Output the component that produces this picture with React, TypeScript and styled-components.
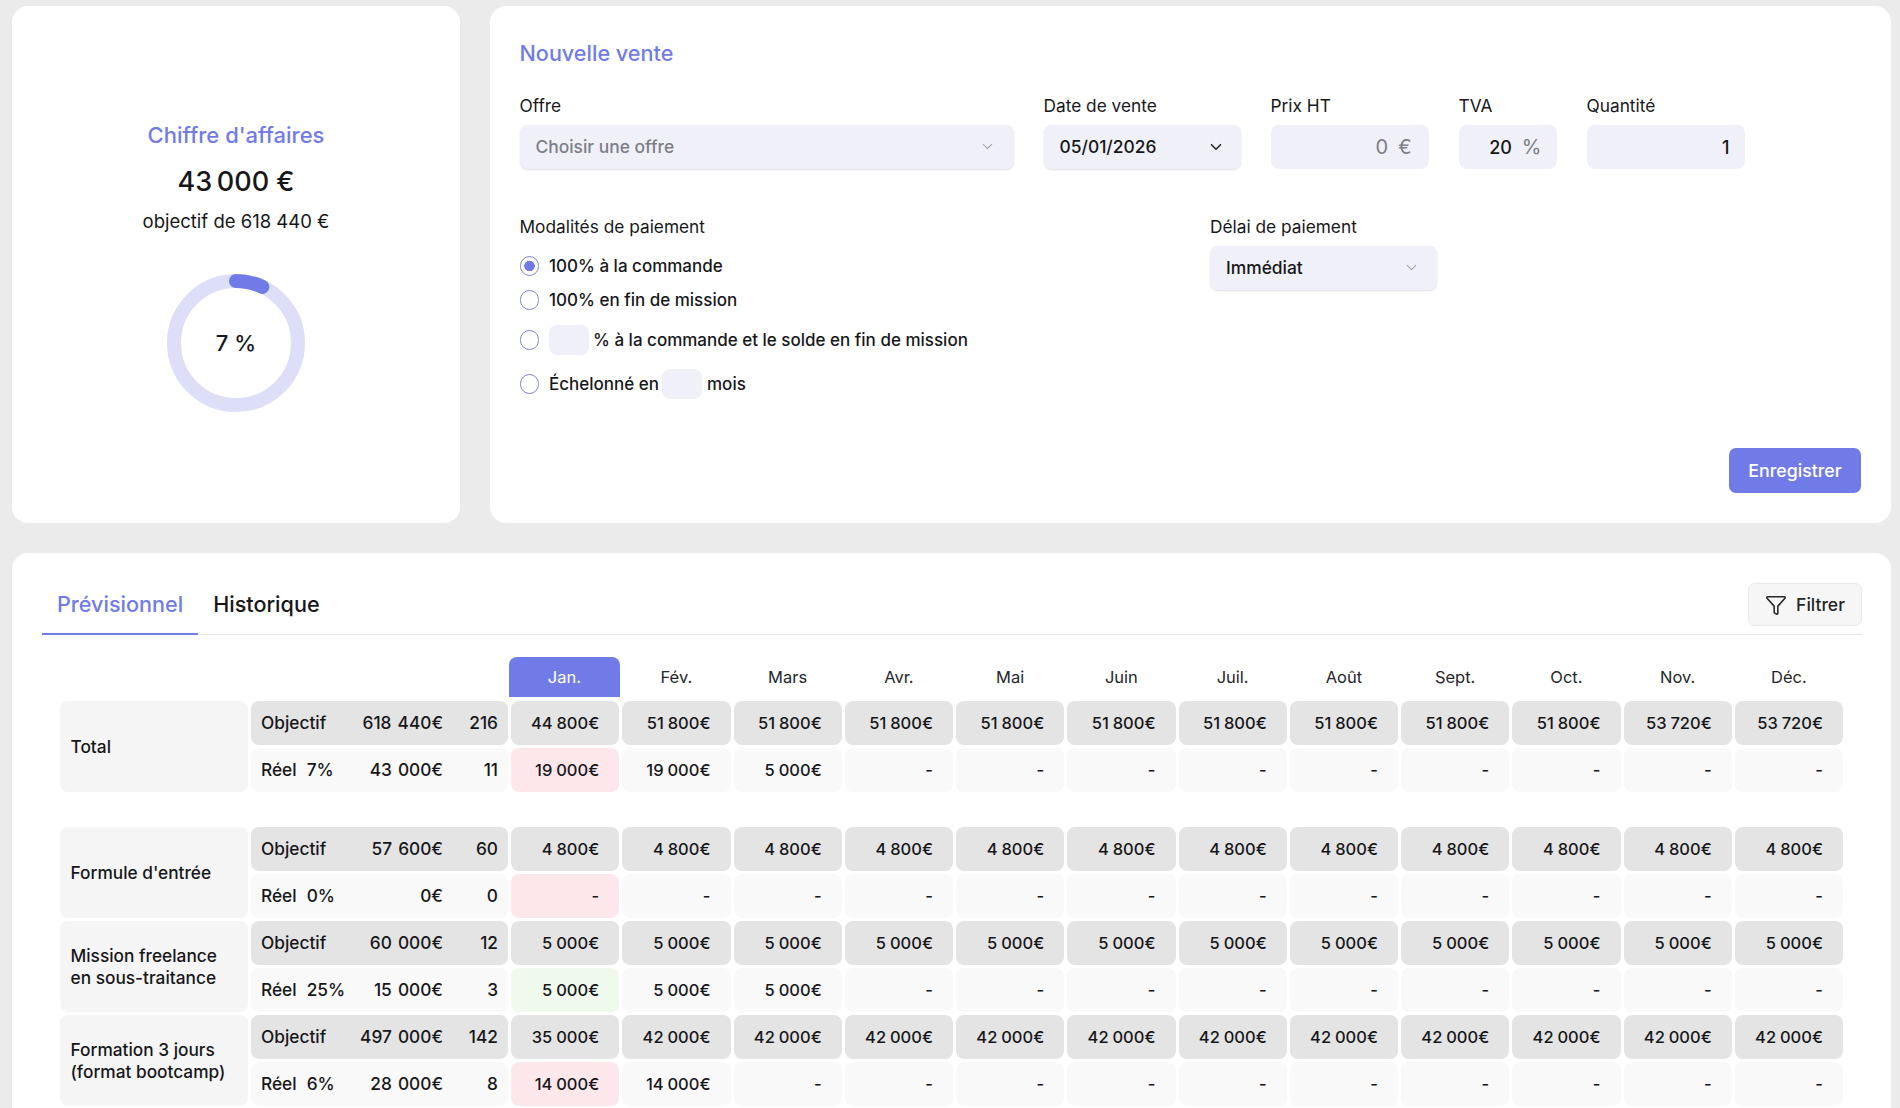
import React from 'react';
import styled, { createGlobalStyle } from 'styled-components';
import { ChevronDown, Filter } from 'lucide-react';

const Global = createGlobalStyle`
  html, body { margin: 0; padding: 0; background: #ebebeb; }
  body { font-family: Inter, "Noto Sans", sans-serif; color: #17171a; overflow: hidden; height: 1108px; }
  * { box-sizing: border-box; }
`;

const ACCENT = '#717be8';

const Page = styled.div`
  height: 1108px;
  overflow: hidden;
  padding: 6px 9px 0 12px;
`;
const TopRow = styled.div`
  display: grid;
  grid-template-columns: 448px 1fr;
  gap: 30px;
  height: 517px;
`;
const Card = styled.section`
  background: #fff;
  border-radius: 16px;
`;
const SummaryCard = styled(Card)`
  display: flex;
  flex-direction: column;
  align-items: center;
  justify-content: center;
  padding-top: 2px;
`;
const SummaryTitle = styled.h2`
  margin: 0;
  font-size: 22px;
  line-height: 30px;
  font-weight: 500;
  color: ${ACCENT};
`;
const SummaryValue = styled.div`
  margin-top: 14px;
  font-size: 27px;
  line-height: 36px;
  font-weight: 550;
`;
const SummaryGoal = styled.div`
  margin-top: 10px;
  font-size: 18.5px;
  line-height: 22px;
`;
const Ring = styled.div`
  margin-top: 42px;
  display: grid;
  place-items: center;
  width: 138px;
  height: 138px;
  & > * { grid-area: 1 / 1; }
`;
const RingText = styled.span`
  font-size: 22px;
  font-weight: 550;
`;

const FormCard = styled(Card)`
  display: flex;
  flex-direction: column;
  padding: 30px 30px 30px 29.5px;
`;
const FormTitle = styled.h2`
  margin: 0 0 26px;
  font-size: 21.6px;
  line-height: 34px;
  font-weight: 500;
  color: ${ACCENT};
`;
const FieldRow = styled.div`
  display: flex;
  gap: 30px;
`;
const Field = styled.div<{ $w: number }>`
  width: ${p => p.$w}px;
`;
const Label = styled.div`
  font-size: 17.3px;
  line-height: 20px;
  margin-bottom: 9px;
`;
const Select = styled.div<{ $muted?: boolean }>`
  height: 44px;
  display: flex;
  align-items: center;
  justify-content: space-between;
  padding: 0 16px 1px;
  border-radius: 8px;
  background: #f0f1f8;
  font-size: 17.4px;
  font-weight: 500;
  color: ${p => (p.$muted ? '#7c7e86' : '#17171a')};
  box-shadow: 0 1px 2px rgba(30, 30, 60, 0.14);
`;
const FaintChevron = styled(ChevronDown)`
  margin-right: 1.5px;
  color: #a0a2ac;
`;
const NumberBox = styled.div<{ $pad?: number }>`
  height: 44px;
  display: flex;
  align-items: center;
  justify-content: flex-end;
  gap: 10px;
  padding: 0 ${p => p.$pad ?? 15}px;
  border-radius: 8px;
  background: #f0f1f8;
  font-size: 18px;
  font-weight: 500;
`;
const Muted = styled.span`
  color: #7c7e86;
  font-size: 20px;
  font-weight: 400;
`;
const PaymentRow = styled.div`
  display: grid;
  grid-template-columns: 690.5px 227px;
  margin-top: 48px;
`;
const RadioList = styled.div`
  display: flex;
  flex-direction: column;
  gap: 12px;
  margin-top: 18px;
`;
const RadioRow = styled.div<{ $tall?: boolean }>`
  display: flex;
  align-items: center;
  height: ${p => (p.$tall ? 30 : 22)}px;
  margin-top: ${p => (p.$tall ? 2 : 0)}px;
  padding-bottom: 1px;
  font-size: 17px;
  font-weight: 450;
`;
const Radio = styled.span<{ $on?: boolean }>`
  width: 19.5px;
  height: 19.5px;
  flex: none;
  margin: 1px 10px 0 0;
  border-radius: 50%;
  border: 1.5px solid #7f86cf;
  background: ${p => (p.$on ? `radial-gradient(circle, ${ACCENT} 0 5px, transparent 5.5px)` : '#fff')};
`;
const SmallInput = styled.span`
  width: 40px;
  height: 30px;
  flex: none;
  margin: 1px 4px 0 0;
  border-radius: 8px;
  background: #f0f1f8;
`;
const InlineSmallInput = styled(SmallInput)`
  margin: 1px 5px 0 3px;
`;
const SaveButton = styled.button`
  margin-top: auto;
  align-self: flex-end;
  width: 132px;
  height: 45px;
  border: 0;
  border-radius: 7px;
  background: ${ACCENT};
  color: #fff;
  font: 500 17.8px Inter, sans-serif;
`;

const TableCard = styled(Card)`
  margin-top: 30px;
  padding: 30px 29px 40px 30px;
`;
const TabBar = styled.div`
  display: flex;
  align-items: flex-start;
  justify-content: space-between;
  height: 52px;
  border-bottom: 1px solid #e6e6e6;
`;
const Tabs = styled.div`
  display: flex;
`;
const Tab = styled.div<{ $active?: boolean }>`
  height: 52px;
  padding: 0 15px;
  font-size: 21.6px;
  line-height: 42px;
  font-weight: 500;
  color: ${p => (p.$active ? ACCENT : '#17171a')};
  border-bottom: 2px solid ${p => (p.$active ? ACCENT : 'transparent')};
  margin-bottom: -1px;
`;
const FilterButton = styled.button`
  width: 114px;
  height: 43px;
  display: flex;
  align-items: center;
  justify-content: center;
  gap: 9px;
  border: 1px solid #e8e8e8;
  border-radius: 7px;
  background: #f6f6f6;
  color: #26262a;
  font: 500 17.5px Inter, sans-serif;
`;
const COLS = '188px 257px repeat(12, 1fr)';
const TableWrap = styled.div`
  margin: 22px 19px 0 18px;
`;
const HeadRow = styled.div`
  display: grid;
  grid-template-columns: ${COLS};
  column-gap: 3px;
  height: 40px;
  margin-bottom: 4px;
`;
const Month = styled.div<{ $current?: boolean }>`
  display: flex;
  align-items: center;
  justify-content: center;
  font-size: 16.5px;
  border-radius: 8px 8px 0 0;
  margin: ${p => (p.$current ? '0 -0.5px 0 -2px' : '0')};
  color: ${p => (p.$current ? '#fff' : '#26262a')};
  background: ${p => (p.$current ? ACCENT : 'transparent')};
`;
const Group = styled.div<{ $spaced?: boolean }>`
  display: grid;
  grid-template-columns: ${COLS};
  grid-auto-rows: 44px;
  gap: 3px;
  margin-bottom: ${p => (p.$spaced ? 35 : 3)}px;
`;
const Name = styled.div`
  grid-row: span 2;
  display: flex;
  align-items: center;
  padding-left: 10.5px;
  font-size: 17.3px;
  line-height: 22px;
  font-weight: 500;
  border-radius: 8px;
  background: #f5f5f5;
`;
const Summary = styled.div<{ $goal?: boolean }>`
  display: grid;
  grid-template-columns: 1fr auto 55px;
  align-items: center;
  padding: 0 10px 1px;
  font-size: 17.3px;
  font-weight: 500;
  word-spacing: 1.5px;
  border-radius: 8px;
  background: ${p => (p.$goal ? '#e4e4e4' : '#f9f9f9')};
`;
const Count = styled.span`
  text-align: right;
`;
const Percent = styled.span`
  margin-left: 10px;
`;
const Cell = styled.div<{ $tone: 'goal' | 'real' | 'pink' | 'green' }>`
  display: flex;
  align-items: center;
  justify-content: flex-end;
  padding-right: 20px;
  font-size: 16.5px;
  font-weight: 500;
  word-spacing: -0.5px;
  border-radius: 8px;
  background: ${p => ({ goal: '#e4e4e4', real: '#f9f9f9', pink: '#fde7eb', green: '#effaec' }[p.$tone])};
`;

const months = ['Jan.', 'Fév.', 'Mars', 'Avr.', 'Mai', 'Juin', 'Juil.', 'Août', 'Sept.', 'Oct.', 'Nov.', 'Déc.'];
const n = '\u00a0';
const rep = (v: string, c: number) => Array(c).fill(v) as string[];
const real = (vals: string[]) => [...vals, ...rep('-', 12 - vals.length)];

type Row = {
  name: React.ReactNode;
  goal: string; goalN: string; goals: string[];
  pct: string; act: string; actN: string; reals: string[];
  tone: 'pink' | 'green'; spaced?: boolean;
};
const rows: Row[] = [
  {
    name: 'Total', goal: `618${n}440€`, goalN: '216',
    goals: [`44${n}800€`, ...rep(`51${n}800€`, 9), ...rep(`53${n}720€`, 2)],
    pct: '7%', act: `43${n}000€`, actN: '11',
    reals: real([`19${n}000€`, `19${n}000€`, `5${n}000€`]), tone: 'pink', spaced: true,
  },
  {
    name: "Formule d'entrée", goal: `57${n}600€`, goalN: '60',
    goals: rep(`4${n}800€`, 12), pct: '0%', act: '0€', actN: '0', reals: real([]), tone: 'pink',
  },
  {
    name: <>Mission freelance<br />en sous-traitance</>, goal: `60${n}000€`, goalN: '12',
    goals: rep(`5${n}000€`, 12), pct: '25%', act: `15${n}000€`, actN: '3',
    reals: real([`5${n}000€`, `5${n}000€`, `5${n}000€`]), tone: 'green',
  },
  {
    name: <>Formation 3 jours<br />(format bootcamp)</>, goal: `497${n}000€`, goalN: '142',
    goals: [`35${n}000€`, ...rep(`42${n}000€`, 11)], pct: '6%', act: `28${n}000€`, actN: '8',
    reals: real([`14${n}000€`, `14${n}000€`]), tone: 'pink',
  },
];

export default function App() {
  return (
    <Page>
      <Global />
      <TopRow>
        <SummaryCard>
          <SummaryTitle>Chiffre d'affaires</SummaryTitle>
          <SummaryValue>43{'\u2009'}000 €</SummaryValue>
          <SummaryGoal>objectif de 618 440 €</SummaryGoal>
          <Ring>
            <svg width="138" height="138" viewBox="0 0 138 138">
              <circle cx="69" cy="69" r="62" fill="none" stroke="#dcdff7" strokeWidth="14" />
              <circle
                cx="69" cy="69" r="62" fill="none" stroke={ACCENT} strokeWidth="14"
                strokeLinecap="round" pathLength={100} strokeDasharray="7 93"
                transform="rotate(-90 69 69)"
              />
            </svg>
            <RingText>7 %</RingText>
          </Ring>
        </SummaryCard>
        <FormCard>
          <FormTitle>Nouvelle vente</FormTitle>
          <FieldRow>
            <Field $w={494}>
              <Label>Offre</Label>
              <Select $muted>Choisir une offre<FaintChevron size={17} strokeWidth={1.5} /></Select>
            </Field>
            <Field $w={197}>
              <Label>Date de vente</Label>
              <Select>05/01/2026<ChevronDown size={18} color="#26262a" strokeWidth={2.2} /></Select>
            </Field>
            <Field $w={158}>
              <Label>Prix HT</Label>
              <NumberBox $pad={17}><Muted>0</Muted><Muted>€</Muted></NumberBox>
            </Field>
            <Field $w={98}>
              <Label>TVA</Label>
              <NumberBox>20<Muted>%</Muted></NumberBox>
            </Field>
            <Field $w={158}>
              <Label>Quantité</Label>
              <NumberBox>1</NumberBox>
            </Field>
          </FieldRow>
          <PaymentRow>
            <div>
              <Label>Modalités de paiement</Label>
              <RadioList>
                <RadioRow><Radio $on />100% à la commande</RadioRow>
                <RadioRow><Radio />100% en fin de mission</RadioRow>
                <RadioRow $tall><Radio /><SmallInput />% à la commande et le solde en fin de mission</RadioRow>
                <RadioRow $tall><Radio />Échelonné en<InlineSmallInput />mois</RadioRow>
              </RadioList>
            </div>
            <div>
              <Label>Délai de paiement</Label>
              <Select>Immédiat<FaintChevron size={17} strokeWidth={1.5} /></Select>
            </div>
          </PaymentRow>
          <SaveButton>Enregistrer</SaveButton>
        </FormCard>
      </TopRow>
      <TableCard>
        <TabBar>
          <Tabs>
            <Tab $active>Prévisionnel</Tab>
            <Tab>Historique</Tab>
          </Tabs>
          <FilterButton><Filter size={22} strokeWidth={1.7} />Filtrer</FilterButton>
        </TabBar>
        <TableWrap>
          <HeadRow>
            <div />
            <div />
            {months.map((m, i) => <Month key={m} $current={i === 0}>{m}</Month>)}
          </HeadRow>
          {rows.map((r, ri) => (
            <Group key={ri} $spaced={r.spaced}>
              <Name>{r.name}</Name>
              <Summary $goal>
                <span>Objectif</span><span>{r.goal}</span><Count>{r.goalN}</Count>
              </Summary>
              {r.goals.map((v, i) => <Cell key={i} $tone="goal">{v}</Cell>)}
              <Summary>
                <span>Réel<Percent>{r.pct}</Percent></span><span>{r.act}</span><Count>{r.actN}</Count>
              </Summary>
              {r.reals.map((v, i) => <Cell key={i} $tone={i === 0 ? r.tone : 'real'}>{v}</Cell>)}
            </Group>
          ))}
        </TableWrap>
      </TableCard>
    </Page>
  );
}
